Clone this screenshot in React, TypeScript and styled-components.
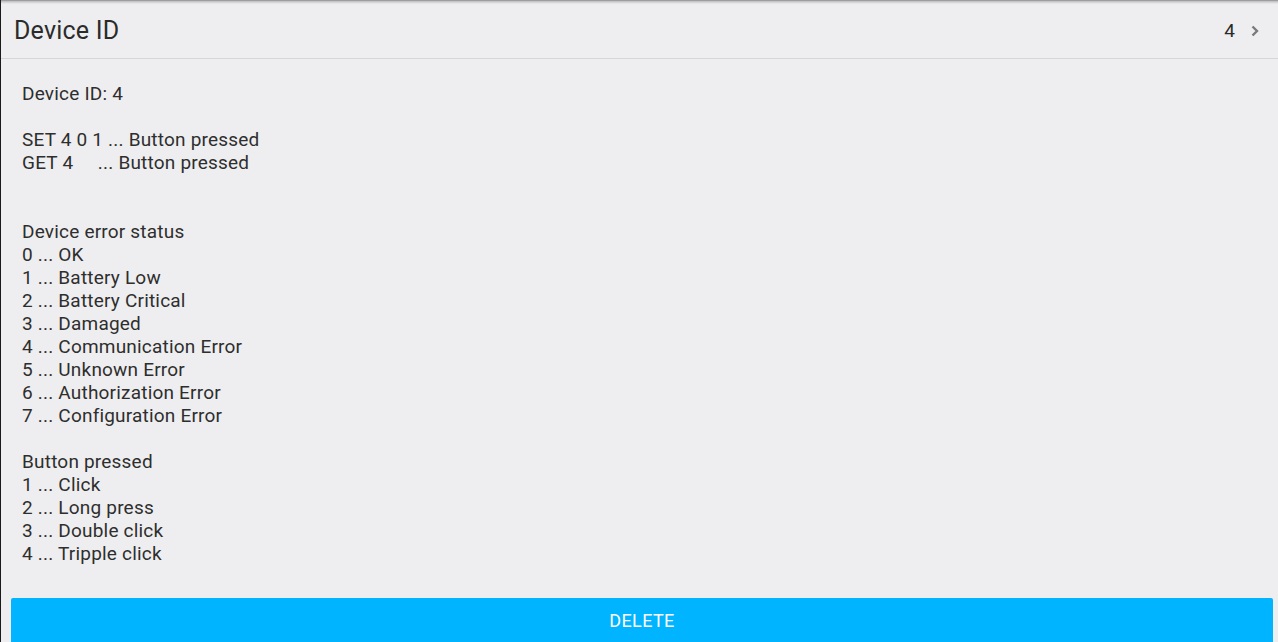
import React from "react";
import styled, { createGlobalStyle } from "styled-components";

const Global = createGlobalStyle`
  html, body { margin: 0; padding: 0; height: 100%; }
  body { background: #eeeef0; font-family: Roboto, "Noto Sans", sans-serif; overflow: hidden; }
  #root { height: 100%; }
`;

const Frame = styled.div`
  position: relative;
  height: 642px;
  width: 1278px;
  box-sizing: border-box;
  border-left: 1px solid #1a1a1a;
  background: #eeeef0;
  display: flex;
  flex-direction: column;
  &::before {
    content: "";
    position: absolute;
    left: 0; right: 0; top: 0;
    height: 4px;
    background: linear-gradient(#8a8a8c, #c8c8ca 40%, #eeeef0);
  }
`;

const Header = styled.header`
  height: 59px;
  display: flex;
  align-items: center;
  justify-content: space-between;
  padding: 3px 18px 0 13px;
  box-sizing: border-box;
  border-bottom: 1px solid #d6d6d8;
`;

const Title = styled.h1`
  margin: 0;
  font-size: 25px;
  font-weight: 400;
  letter-spacing: 0.2px;
  color: #2b2b2b;
`;

const Nav = styled.div`
  display: flex;
  align-items: center;
  gap: 15px;
  font-size: 19px;
  color: #2b2b2b;
`;

const Body = styled.main`
  flex: 1;
  padding: 23px 21px 0;
  font-size: 19px;
  line-height: 23px;
  letter-spacing: 0.2px;
  color: #2e2e2e;
  white-space: pre;
`;

const Line = styled.div`
  min-height: 23px;
`;

const Footer = styled.div`
  padding: 0 5px 0 10px;
`;

const DeleteButton = styled.button`
  width: 100%;
  height: 46px;
  margin-bottom: -2px;
  border: none;
  border-radius: 2px 2px 0 0;
  background: #00b4ff;
  color: #ffffff;
  font-family: Roboto, "Noto Sans", sans-serif;
  font-size: 18px;
  letter-spacing: 0.4px;
  padding-bottom: 2px;
`;

const lines = [
  "Device ID: 4",
  "",
  "SET 4 0 1 ... Button pressed",
  "GET 4     ... Button pressed",
  "",
  "",
  "Device error status",
  "0 ... OK",
  "1 ... Battery Low",
  "2 ... Battery Critical",
  "3 ... Damaged",
  "4 ... Communication Error",
  "5 ... Unknown Error",
  "6 ... Authorization Error",
  "7 ... Configuration Error",
  "",
  "Button pressed",
  "1 ... Click",
  "2 ... Long press",
  "3 ... Double click",
  "4 ... Tripple click",
];

export default function App() {
  return (
    <>
      <Global />
      <Frame>
        <Header>
          <Title>Device ID</Title>
          <Nav>
            <span>4</span>
            <svg width="10" height="12" viewBox="0 0 10 12">
              <path d="M2.5 1.5 L7 6 L2.5 10.5" fill="none" stroke="#7a7a7a" strokeWidth="2.4" />
            </svg>
          </Nav>
        </Header>
        <Body>
          {lines.map((l, i) => (
            <Line key={i}>{l}</Line>
          ))}
        </Body>
        <Footer>
          <DeleteButton>DELETE</DeleteButton>
        </Footer>
      </Frame>
    </>
  );
}
